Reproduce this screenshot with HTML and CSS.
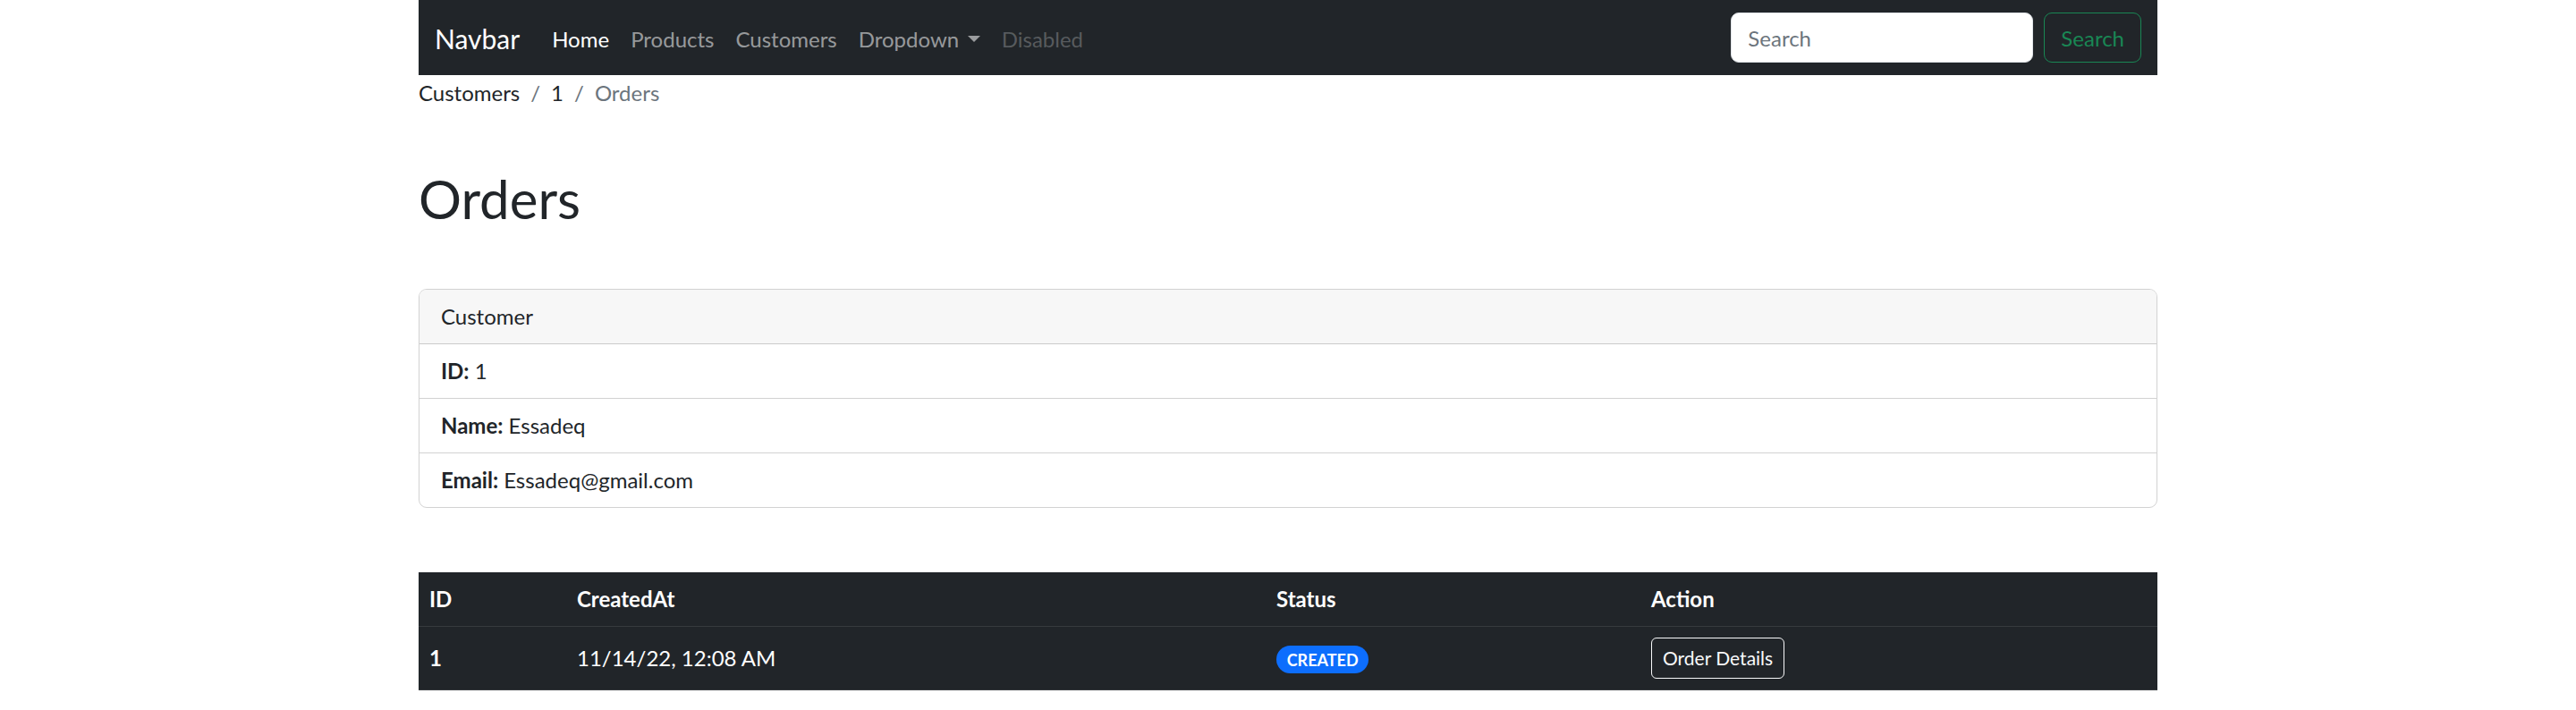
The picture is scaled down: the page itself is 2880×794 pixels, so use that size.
FILE: index.html
```html
<!DOCTYPE html>
<html lang="en">
<head>
    <meta charset="UTF-8">
    <meta name="viewport" content="width=device-width, initial-scale=1.0">
    <title>Orders</title>
    <link rel="stylesheet" href="styles.css">
</head>
<body>
    <div class="container">
        <nav class="navbar">
            <a class="navbar-brand" href="#">Navbar</a>
            <ul class="nav-links">
                <li><a class="nav-link active" href="#">Home</a></li>
                <li><a class="nav-link" href="#">Products</a></li>
                <li><a class="nav-link" href="#">Customers</a></li>
                <li><a class="nav-link dropdown-toggle" href="#">Dropdown</a></li>
                <li><a class="nav-link disabled">Disabled</a></li>
            </ul>
            <form class="search-form">
                <input class="search-input" type="search" placeholder="Search">
                <button class="search-btn" type="submit">Search</button>
            </form>
        </nav>

        <ol class="breadcrumb">
            <li class="breadcrumb-item"><a href="#">Customers</a></li>
            <li class="breadcrumb-item"><a href="#">1</a></li>
            <li class="breadcrumb-item active">Orders</li>
        </ol>

        <h1 class="page-title">Orders</h1>

        <!-- Customer info -->
        <div class="card">
            <div class="card-header">Customer</div>
            <ul class="list-group">
                <li class="list-item"><b>ID:</b> 1</li>
                <li class="list-item"><b>Name:</b> Essadeq</li>
                <li class="list-item"><b>Email:</b> Essadeq@gmail.com</li>
            </ul>
        </div>

        <!-- Orders list -->
        <table class="orders-table">
            <thead>
                <tr>
                    <th class="col-id">ID</th>
                    <th class="col-date">CreatedAt</th>
                    <th class="col-status">Status</th>
                    <th class="col-action">Action</th>
                </tr>
            </thead>
            <tbody>
                <tr>
                    <th>1</th>
                    <td>11/14/22, 12:08 AM</td>
                    <td><span class="badge">CREATED</span></td>
                    <td><a class="details-btn" href="#">Order Details</a></td>
                </tr>
            </tbody>
        </table>
    </div>
</body>
</html>
```

FILE: styles.css
```css
* {
    box-sizing: border-box;
}

html {
    font-size: 24px;
}

body {
    margin: 0;
    font-family: "Segoe UI", Lato, "Noto Sans", sans-serif;
    font-size: 1rem;
    line-height: 1.5;
    color: #212529;
    background: #fff;
}

a {
    text-decoration: none;
}

.container {
    max-width: 1980px;
    margin: 0 auto;
    padding: 0 18px;
}

/* Navbar */
.navbar {
    display: flex;
    align-items: center;
    background: #212529;
    padding: 12px 18px;
    min-height: 83px;
}

.navbar-brand {
    color: #fff;
    font-size: 1.25rem;
    padding: 8px 0 6px;
    margin-right: 24px;
    white-space: nowrap;
}

.nav-links {
    display: flex;
    list-style: none;
    margin: 0;
    padding: 0;
    flex: 1;
}

.nav-link {
    display: block;
    padding: 14px 12px 10px;
    color: rgba(255, 255, 255, 0.55);
}

.nav-link.active {
    color: #fff;
}

.nav-link.disabled {
    color: rgba(255, 255, 255, 0.25);
}

.dropdown-toggle::after {
    content: "";
    display: inline-block;
    margin-left: 0.4em;
    vertical-align: 0.23em;
    border-top: 0.3em solid;
    border-right: 0.3em solid transparent;
    border-left: 0.3em solid transparent;
}

.search-form {
    display: flex;
    gap: 12px;
}

.search-input {
    width: 338px;
    padding: 10px 18px 8px;
    font: inherit;
    color: #212529;
    background: #fff;
    border: 1.5px solid #dee2e6;
    border-radius: 9px;
}

.search-input::placeholder {
    color: #6c757d;
}

.search-btn {
    padding: 10px 18px 8px;
    font: inherit;
    color: #198754;
    background: transparent;
    border: 1.5px solid #198754;
    border-radius: 9px;
}

/* Breadcrumb */
.breadcrumb {
    display: flex;
    list-style: none;
    margin: 0 0 24px;
    padding: 2px 0 0;
}

.breadcrumb-item a {
    color: #212529;
}

.breadcrumb-item + .breadcrumb-item {
    padding-left: 12px;
}

.breadcrumb-item + .breadcrumb-item::before {
    content: "/";
    padding-right: 12px;
    color: #6c757d;
}

.breadcrumb-item.active {
    color: #6c757d;
}

.page-title {
    font-size: 2.5rem;
    font-weight: 400;
    line-height: 1.2;
    margin: 64px 0 65px;
}

/* Customer card */
.card {
    border: 1.5px solid rgba(0, 0, 0, 0.175);
    border-radius: 9px;
    overflow: hidden;
    margin-bottom: 72px;
}

.card-header {
    background: #f7f7f7;
    padding: 12px 24px;
    border-bottom: 1.5px solid rgba(0, 0, 0, 0.175);
}

.list-group {
    list-style: none;
    margin: 0;
    padding: 0;
}

.list-item {
    padding: 12px 24px;
}

.list-item + .list-item {
    border-top: 1.5px solid rgba(0, 0, 0, 0.175);
}

/* Orders table */
.orders-table {
    width: 100%;
    border-collapse: collapse;
    background: #212529;
    color: #fff;
    margin-bottom: 24px;
}

.orders-table th,
.orders-table td {
    text-align: left;
    vertical-align: middle;
    padding: 12px;
    border-bottom: 1.5px solid #373b3e;
}

.orders-table th {
    font-weight: 700;
}

.col-id { width: 165px; }
.col-date { width: 782px; }
.col-status { width: 419px; }

.badge {
    display: inline-block;
    padding: 0.35em 0.65em;
    font-size: 0.75em;
    font-weight: 700;
    line-height: 1;
    color: #fff;
    background: #0d6efd;
    border-radius: 50rem;
}

.details-btn {
    display: inline-block;
    padding: 6px 12px;
    font-size: 0.875rem;
    color: #f8f9fa;
    border: 1.5px solid #f8f9fa;
    border-radius: 6px;
}
```
